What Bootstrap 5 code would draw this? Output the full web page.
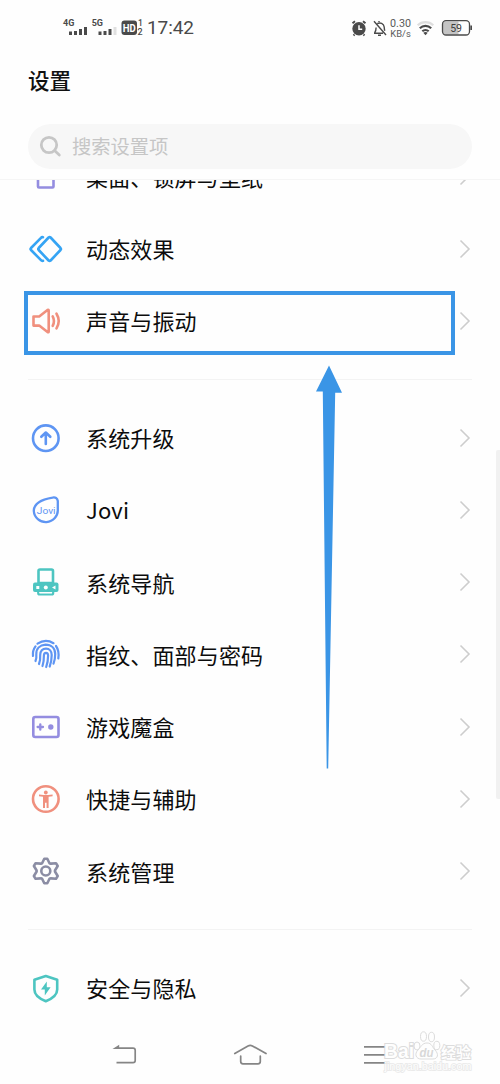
<!DOCTYPE html>
<html lang="zh-CN">
<head>
<meta charset="utf-8">
<meta name="viewport" content="width=device-width, initial-scale=1">
<title>设置</title>
<link href="https://cdn.jsdelivr.net/npm/bootstrap@5.3.0/dist/css/bootstrap.min.css" rel="stylesheet">
<style>
  body { font-family: "Noto Sans CJK SC", "Noto Sans", sans-serif; background: #fefefe; color: #0c0c0c; }
  svg { display: block; flex: none; }
  svg.ic { width: 36px; height: 36px; fill: none; stroke: currentColor; stroke-width: 2.6; stroke-linecap: round; stroke-linejoin: round; }
  .screen { width: 500px; height: 1084px; }
  .statusbar { height: 56px; padding: 0 28px 0 62px; color: #4a4a4a; }
  .clock { font: 400 19px/24px Roboto, sans-serif; letter-spacing: -.1px; margin-left: 1px; }
  .heading { height: 68px; padding: 8px 28px 0; font-size: 21.5px; font-weight: 500; line-height: 32px; color: #111; }
  .searchbox { height: 44.5px; margin: 0 28px; background: #f7f7f7; color: #c6c6c6; font-size: 19.3px; line-height: 30px; padding-left: 11px; }
  .pane { height: 846px; margin-top: 10.5px; border-top: 1px solid #f5f5f5; }
  .scroller { margin-top: -39.7px; padding: 0 28px; }
  .item { height: 72.25px; }
  .label { margin-left: 22px; font-size: 22px; line-height: 32px; letter-spacing: .15px; padding-bottom: 1px; }
  .latin { font-family: "Noto Sans CJK SC", sans-serif; }
  .rule { height: 44.5px; }
  .rule div { height: 1px; background: #f3f3f3; width: 100%; }
  .arrow { margin-left: auto; color: #cdcdcd; }
  .c-violet { color: #948de0; } .c-sky { color: #35a4f4; } .c-coral { color: #f0907e; }
  .c-blue { color: #5e95f3; } .c-teal { color: #4dc5c1; } .c-slate { color: #8b8da4; }
  .focusbox { left: 24px; top: 291px; width: 431px; height: 64px; border: 4px solid #3a95e6; }
  .pointer { left: 314px; top: 364px; }
  .thumb { left: 496px; top: 450px; width: 4px; height: 349px; background: #f1f1f1; border-radius: 2px 0 0 2px; }
  .navbtns { height: 60px; color: #858585; gap: 91px; }
  .wm { left: 380px; top: 1025px; }
</style>
</head>
<body>
<div class="screen position-relative overflow-hidden">
  <header class="statusbar d-flex align-items-center justify-content-between">
    <div class="d-flex align-items-center">
      <svg width="84" height="26" viewBox="62 15 84 26" fill="#4a4a4a" font-family="Roboto, sans-serif" font-weight="700">
        <text x="63" y="26.4" font-size="9">4G</text>
        <path d="M69 31.5h3v3.5h-3zM74 31h3v4h-3zM79 29h3v6h-3zM84 27h3v8h-3z"/>
        <text x="91.7" y="26.4" font-size="9">5G</text>
        <path d="M98.500 31.500h3v3.500h-3zM103.500 31h3v4h-3zM108.500 29h3v6h-3z"/><path d="M113.500 27h3v8h-3z" fill="#e0e0e0"/>
        <rect x="121.500" y="20.500" width="15.500" height="14.500" rx="3"/>
        <text x="122.800" y="31.600" font-size="10" fill="#fff" textLength="13" lengthAdjust="spacingAndGlyphs">HD</text>
        <text x="138" y="26.200" font-size="8.500" font-weight="500">1</text>
        <text x="137.500" y="35" font-size="9" font-weight="500">2</text>
      </svg>
      <span class="clock">17:42</span>
    </div>
    <svg width="124" height="26" viewBox="348 15 124 26" fill="none" stroke="#4a4a4a" font-family="Roboto, sans-serif">
      <circle cx="359" cy="28.800" r="6.700" fill="#4a4a4a" stroke="none"/>
      <path d="M352.500 23.300l2.500-2M365.500 23.300l-2.500-2M354.500 34.500l-1 1M363.500 34.500l1 1" stroke-width="2"/>
      <path d="M359 25.300v4h3.200" stroke="#fff" stroke-width="1.500"/>
      <path d="M374.500 33.200c1.500-2 1.600-3.300 1.600-5.700M377.300 23.700a4.500 4.500 0 0 1 6.900 3.300c.1 1.500.1 2.600.6 3.800M374 33.200h9M379 21v1M378 35.200h3M374 21.200l12 13.800" stroke-width="1.400"/>
      <g fill="#5a5a5a" stroke="none"><text x="390" y="27" font-size="10" textLength="21" lengthAdjust="spacingAndGlyphs">0.30</text><text x="390.300" y="36.500" font-size="9" textLength="20.500" lengthAdjust="spacingAndGlyphs">KB/s</text></g>
      <path d="M417.700 25.300a11.200 11.200 0 0 1 15.600 0" stroke="#dedede" stroke-width="2.200"/>
      <path d="M419.800 28.200a8.300 8.300 0 0 1 11.400 0M422.300 31.200a4.800 4.800 0 0 1 6.400 0" stroke-width="2.200"/>
      <path d="M423.300 32.800q2.200-1.600 4.400 0l-2.200 2.400z" fill="#4a4a4a" stroke="none"/>
      <path d="M445 21.500h13.500v13H445a2.500 2.500 0 0 1-2.500-2.500v-8a2.500 2.500 0 0 1 2.500-2.500z" fill="#c4c4c4" stroke="none"/>
      <rect x="442.500" y="20.700" width="27" height="14.300" rx="3.500" stroke-width="1.300"/>
      <path d="M471.200 25.500v4.500" stroke-width="1.800"/>
      <text x="450.200" y="31.600" font-size="10.500" font-weight="400" fill="#3d3d3d" stroke="none">59</text>
    </svg>
  </header>

  <h1 class="heading m-0">设置</h1>

  <div class="searchbox rounded-pill d-flex align-items-center gap-2">
    <svg width="25" height="25" viewBox="0 0 25 25" fill="none" stroke="currentColor" stroke-width="2.800" stroke-linecap="round"><circle cx="10" cy="11" r="7.700"/><path d="M15.800 16.800l4.500 4.200"/></svg>
    <span>搜索设置项</span>
  </div>

  <main class="pane overflow-hidden">
    <div class="scroller">
      <div class="item d-flex align-items-center">
        <svg class="ic c-violet" viewBox="0 0 36 36"><rect x="10" y="5" width="15.500" height="24.500" rx="1"/></svg>
        <span class="label">桌面、锁屏与壁纸</span>
        <svg class="arrow" width="13" height="20" viewBox="0 0 13 20" fill="none" stroke="currentColor" stroke-width="1.600"><path d="M1.500 1.500L10 10l-8.500 8.500"/></svg>
      </div>
      <div class="item d-flex align-items-center">
        <svg class="ic c-sky" viewBox="0 0 36 36"><path d="M20.600 6.500a1.500 1.500 0 0 1 2 0L32.500 17a1.500 1.500 0 0 1 0 2l-9.900 10.500a1.500 1.500 0 0 1-2 0L10.700 19a1.500 1.500 0 0 1 0-2zM15 6.200q-1.200-.3-2 .6L3 17a1.500 1.500 0 0 0 0 2l10 10.200q.8.900 2 .6"/></svg>
        <span class="label">动态效果</span>
        <svg class="arrow" width="13" height="20" viewBox="0 0 13 20" fill="none" stroke="currentColor" stroke-width="1.600"><path d="M1.500 1.500L10 10l-8.500 8.500"/></svg>
      </div>
      <div class="item d-flex align-items-center">
        <svg class="ic c-coral" viewBox="0 0 36 36"><path d="M5.500 13.500h5.700L19.500 7q1.200-.5 1.200.8v20.700q0 1.200-1.200.6l-8.300-6.500H5.500zM24.700 13.300q2.500 4.700 0 9.600M28.500 10.700q4.500 7.300 0 14.700"/></svg>
        <span class="label">声音与振动</span>
        <svg class="arrow" width="13" height="20" viewBox="0 0 13 20" fill="none" stroke="currentColor" stroke-width="1.600"><path d="M1.500 1.500L10 10l-8.500 8.500"/></svg>
      </div>

      <div class="rule d-flex align-items-center"><div></div></div>

      <div class="item d-flex align-items-center">
        <svg class="ic c-blue" viewBox="0 0 36 36"><circle cx="17.800" cy="18.200" r="12.800"/><path d="M17.800 24V13M13.300 16.800l4.500-4.300 4.500 4.300"/></svg>
        <span class="label">系统升级</span>
        <svg class="arrow" width="13" height="20" viewBox="0 0 13 20" fill="none" stroke="currentColor" stroke-width="1.600"><path d="M1.500 1.500L10 10l-8.500 8.500"/></svg>
      </div>
      <div class="item d-flex align-items-center">
        <svg class="ic c-blue" viewBox="0 0 36 36"><path d="M24.500 5.600Q29 4.700 29.800 9v8.500a12 11.800 0 0 1-24 1.500C5.800 12 13 7.500 24.500 5.600z" stroke-width="2.300"/><text x="8.800" y="22" font-family="Roboto, sans-serif" font-size="9" fill="currentColor" stroke="none" textLength="18.800" lengthAdjust="spacingAndGlyphs">Jovi</text></svg>
        <span class="label latin">Jovi</span>
        <svg class="arrow" width="13" height="20" viewBox="0 0 13 20" fill="none" stroke="currentColor" stroke-width="1.600"><path d="M1.500 1.500L10 10l-8.500 8.500"/></svg>
      </div>
      <div class="item d-flex align-items-center">
        <svg class="ic c-teal" viewBox="0 0 36 36"><path d="M10.500 19V7q0-1.500 1.500-1.500h11.500q1.500 0 1.500 1.500v12z"/><rect x="5" y="18.500" width="25.500" height="9.600" rx="2" fill="currentColor" stroke="none"/><path d="M10.200 28v1q0 1.500 1.500 1.500h12q1.500 0 1.500-1.500v-1" stroke-width="2.200"/><path d="M12 28.600h11.500" stroke="#fefefe" stroke-width="1"/><g fill="#fefefe" stroke="none"><path d="M8.300 22h3v3h-3z"/><circle cx="17.800" cy="23.500" r="2"/><path d="M27.500 21.500v4l-3.500-2z"/></g></svg>
        <span class="label">系统导航</span>
        <svg class="arrow" width="13" height="20" viewBox="0 0 13 20" fill="none" stroke="currentColor" stroke-width="1.600"><path d="M1.500 1.500L10 10l-8.500 8.500"/></svg>
      </div>
      <div class="item d-flex align-items-center">
        <svg class="ic c-blue" viewBox="0 0 36 36"><g stroke-width="2.200"><path d="M9.500 7.700Q17.500 2.500 25.500 7.200M5 20Q4.300 14.500 7.500 10.300M28 10Q31.500 15 30.300 22.500"/><path d="M7.500 25q1.200-3 .8-6.500C8 12.500 12 9 17.500 8.700 23.500 8.800 27.200 12.500 27.200 18q0 5.500-1.700 9.700"/><path d="M11 28q1.500-4 1.200-9c0-4 2.300-6.300 5.800-6.300s5.700 2.500 5.700 6.300q0 6-2 11.500"/><path d="M14.500 30q1.500-4.500 1.400-10.500c0-1.800.8-2.700 2.100-2.700s2.100.9 2.100 2.700q0 6-1.900 11.500"/></g></svg>
        <span class="label">指纹、面部与密码</span>
        <svg class="arrow" width="13" height="20" viewBox="0 0 13 20" fill="none" stroke="currentColor" stroke-width="1.600"><path d="M1.500 1.500L10 10l-8.500 8.500"/></svg>
      </div>
      <div class="item d-flex align-items-center">
        <svg class="ic c-violet" viewBox="0 0 36 36"><rect x="5.300" y="8" width="25.200" height="20" rx="2"/><path d="M12.300 15.300v5.400M9.600 18h5.400" stroke-width="2.300"/><circle cx="22.800" cy="18" r="2.700" fill="currentColor" stroke="none"/></svg>
        <span class="label">游戏魔盒</span>
        <svg class="arrow" width="13" height="20" viewBox="0 0 13 20" fill="none" stroke="currentColor" stroke-width="1.600"><path d="M1.500 1.500L10 10l-8.500 8.500"/></svg>
      </div>
      <div class="item d-flex align-items-center">
        <svg class="ic c-coral" viewBox="0 0 36 36"><circle cx="17.800" cy="18" r="12.800"/><g fill="currentColor" stroke="none"><circle cx="17.800" cy="11.500" r="1.900"/><path d="M11 13.500l4.500.4h4.600l4.500-.4v1.700l-4 .6V27h-2v-5.300h-1.600V27h-2V15.800l-4-.6z"/></g></svg>
        <span class="label">快捷与辅助</span>
        <svg class="arrow" width="13" height="20" viewBox="0 0 13 20" fill="none" stroke="currentColor" stroke-width="1.600"><path d="M1.500 1.500L10 10l-8.500 8.500"/></svg>
      </div>
      <div class="item d-flex align-items-center">
        <svg class="ic c-slate" viewBox="0 0 36 36"><path d="M16.300 5.800h3l2.200 4.500q.6.500 1.500.3l5-.4 1.700 2.800-2.600 4.200q-.4.800 0 1.600l2.600 4.200-1.700 2.800-5-.4q-.9-.2-1.500.3l-2.200 4.500h-3l-2.200-4.500q-.6-.5-1.500-.3l-5 .4L5.900 23l2.600-4.200q.4-.8 0-1.600L5.900 13l1.700-2.800 5 .4q.9.200 1.500-.3z"/><circle cx="17.800" cy="18" r="4.500"/></svg>
        <span class="label">系统管理</span>
        <svg class="arrow" width="13" height="20" viewBox="0 0 13 20" fill="none" stroke="currentColor" stroke-width="1.600"><path d="M1.500 1.500L10 10l-8.500 8.500"/></svg>
      </div>

      <div class="rule d-flex align-items-center"><div></div></div>

      <div class="item d-flex align-items-center">
        <svg class="ic c-teal" viewBox="0 0 36 36"><path d="M17.800 6l11.400 3.800v9.700c0 5.500-4.500 9-11.400 11.700C10.900 28.500 6.400 25 6.400 19.500V9.800z"/><path d="M18.800 11.500v5.700h3.800l-5.800 8.300v-6h-3.800z" fill="currentColor" stroke="none"/></svg>
        <span class="label">安全与隐私</span>
        <svg class="arrow" width="13" height="20" viewBox="0 0 13 20" fill="none" stroke="currentColor" stroke-width="1.600"><path d="M1.500 1.500L10 10l-8.500 8.500"/></svg>
      </div>
    </div>
  </main>

  <nav class="navbtns d-flex justify-content-center align-items-center" aria-label="导航">
    <svg width="32" height="26" viewBox="109 1042 32 26" fill="none" stroke="currentColor" stroke-width="1.700"><path d="M116.500 1062.700h16.500q2.200 0 2.200-2.200v-10.200q0-2.200-2.200-2.200h-17"/><path d="M112.500 1048.900l6.700-4.200v4.200z" fill="currentColor" stroke="none"/></svg>
    <svg width="36" height="26" viewBox="232 1042 36 26" fill="none" stroke="currentColor" stroke-width="1.700" stroke-linecap="round"><path d="M234.800 1053.500l13.200-7.600q2.200-1.200 4.400 0l13.600 7.600M240.700 1056v5.500q0 2.300 2.300 2.300h15q2.300 0 2.300-2.300v-5.500"/></svg>
    <svg width="32" height="26" viewBox="359 1042 32 26" fill="none" stroke="currentColor" stroke-width="1.800"><path d="M364 1046.800h21M364 1054.800h21M364 1062.800h22.500"/></svg>
  </nav>

  <div class="focusbox position-absolute"></div>
  <svg class="pointer position-absolute" width="30" height="406" viewBox="314 364 30 406"><path d="M329 365.500L342 392.700h-6.800L328.200 768.500h-1.500L322.800 391.500h-6.800z" fill="#3a95e6"/></svg>
  <div class="thumb position-absolute"></div>
  <svg class="wm position-absolute" width="100" height="52" viewBox="380 1025 100 52" fill="#fefefe" stroke="#dcdcdc" stroke-width="1" font-family="Liberation Sans, sans-serif" font-weight="700">
    <text x="384" y="1057.500" font-size="19.500" stroke-width="2" paint-order="stroke" textLength="30" lengthAdjust="spacingAndGlyphs">Bai</text>
    <ellipse cx="417" cy="1046" rx="3" ry="4"/><ellipse cx="423.500" cy="1036.500" rx="3" ry="4.700"/><ellipse cx="431.500" cy="1037" rx="3" ry="4.700"/><ellipse cx="436.800" cy="1045.500" rx="3" ry="4.200"/>
    <path d="M427 1043c-5 0-6 4-9 7-4 4-2 9 3 9h12c5 0 6-5 2-9-3-3-3-7-8-7z"/>
    <text x="419.500" y="1057" font-size="13.500" font-style="italic" fill="#d8d8d8" stroke="none" textLength="14" lengthAdjust="spacingAndGlyphs">du</text>
    <text x="441" y="1057.500" font-size="15" stroke-width="1.800" paint-order="stroke" font-family="Noto Sans CJK SC, sans-serif">经验</text>
    <text x="384.500" y="1070" font-size="10.500" font-weight="400" stroke="#e8e8e8" stroke-width="1.600" paint-order="stroke" textLength="87" lengthAdjust="spacingAndGlyphs">jingyan.baidu.com</text>
  </svg>
</div>
<script src="https://cdn.jsdelivr.net/npm/bootstrap@5.3.0/dist/js/bootstrap.bundle.min.js"></script>
</body>
</html>
